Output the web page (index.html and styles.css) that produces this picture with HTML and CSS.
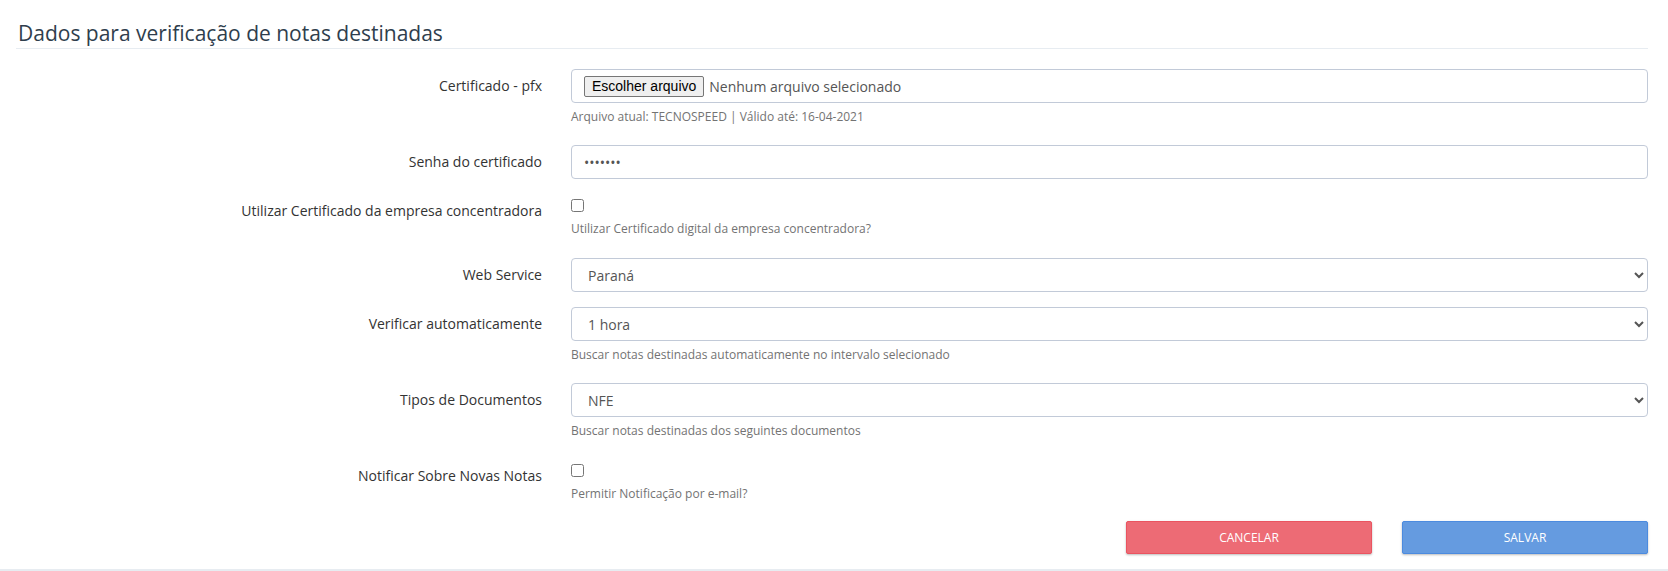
FILE: index.html
```html
<!DOCTYPE html>
<html lang="pt-BR">
<head>
<meta charset="utf-8">
<title>Dados para verificação de notas destinadas</title>
<link rel="stylesheet" href="styles.css">
</head>
<body>
<div class="page">
  <div class="portlet-title"><span class="caption">Dados para verificação de notas destinadas</span></div>
  <form class="form">
    <div class="row row-help">
      <label class="label">Certificado - pfx</label>
      <div class="field">
        <div class="control file-control"><span class="file-btn">Escolher arquivo</span><span class="file-name">Nenhum arquivo selecionado</span></div>
        <span class="help">Arquivo atual: TECNOSPEED | Válido até: 16-04-2021</span>
      </div>
    </div>
    <div class="row">
      <label class="label">Senha do certificado</label>
      <div class="field">
        <input class="control" type="password" value="1234567">
      </div>
    </div>
    <div class="row row-check">
      <label class="label">Utilizar Certificado da empresa concentradora</label>
      <div class="field">
        <div class="check-wrap"><input type="checkbox" class="check"></div>
        <span class="help help-check">Utilizar Certificado digital da empresa concentradora?</span>
      </div>
    </div>
    <div class="row">
      <label class="label">Web Service</label>
      <div class="field">
        <select class="control select"><option>Paraná</option></select>
      </div>
    </div>
    <div class="row row-help">
      <label class="label">Verificar automaticamente</label>
      <div class="field">
        <select class="control select"><option>1 hora</option></select>
        <span class="help">Buscar notas destinadas automaticamente no intervalo selecionado</span>
      </div>
    </div>
    <div class="row row-help">
      <label class="label">Tipos de Documentos</label>
      <div class="field">
        <select class="control select"><option>NFE</option></select>
        <span class="help">Buscar notas destinadas dos seguintes documentos</span>
      </div>
    </div>
    <div class="row row-check-last">
      <label class="label">Notificar Sobre Novas Notas</label>
      <div class="field">
        <div class="check-wrap"><input type="checkbox" class="check"></div>
        <span class="help help-check">Permitir Notificação por e-mail?</span>
      </div>
    </div>
    <div class="actions">
      <button type="button" class="btn btn-red">Cancelar</button>
      <button type="button" class="btn btn-blue">Salvar</button>
    </div>
  </form>
</div>
<div class="footer-line"></div>
</body>
</html>
```

FILE: styles.css
```css
html, body {
  margin: 0;
  padding: 0;
  background: #fff;
}
body {
  font-family: "Open Sans", "DejaVu Sans", sans-serif;
  font-size: 14px;
  color: #333;
}
.page {
  padding: 18px 20px 15px 16px;
}
.portlet-title {
  height: 30px;
  line-height: 30px;
  border-bottom: 1px solid #e7ecf1;
}
.caption {
  font-size: 21px;
  color: #2f3e4d;
  padding-left: 2px;
}
.form {
  margin-top: 20px;
}
.row {
  display: grid;
  grid-template-columns: 526px 1fr;
  column-gap: 29px;
  margin-bottom: 15px;
}
.row-help {
  margin-bottom: 19px;
}
.row-check {
  margin-bottom: 20px;
}
.row-check-last {
  margin-bottom: 18px;
}
.label {
  text-align: right;
  padding-top: 7px;
  line-height: 20px;
  color: #333;
}
.field {
  display: flex;
  flex-direction: column;
  align-items: stretch;
}
.control {
  box-sizing: border-box;
  height: 34px;
  width: 100%;
  margin: 0;
  border: 1px solid #c2cad8;
  border-radius: 4px;
  background: #fff;
  padding: 6px 12px;
  font-family: "Open Sans", sans-serif;
  font-size: 14px;
  color: #555;
  outline: none;
}
.file-control {
  display: flex;
  align-items: center;
  padding-top: 0;
  padding-bottom: 0;
}
.file-btn {
  box-sizing: border-box;
  height: 21px;
  line-height: 17px;
  padding: 1px 7px;
  border: 1px solid #767676;
  border-radius: 2px;
  background: #efefef;
  color: #000;
  font-family: "Liberation Sans", Arial, sans-serif;
  font-size: 14px;
  margin-right: 5px;
}
.file-name {
  color: #555;
  font-size: 14px;
}
.select {
  padding-left: 12px;
}
.help {
  display: block;
  margin-top: 5px;
  line-height: 18px;
  font-size: 12px;
  color: #737373;
}
.check-wrap {
  padding-top: 5px;
  height: 13px;
  line-height: 0;
}
.check {
  width: 13px;
  height: 13px;
  margin: 0;
}
.help-check {
  margin-top: 8px;
}
.actions {
  display: flex;
  justify-content: flex-end;
  gap: 30px;
}
.btn {
  box-sizing: border-box;
  width: 246px;
  height: 33px;
  border-radius: 2px;
  font-family: "Open Sans", sans-serif;
  font-size: 12px;
  text-transform: uppercase;
  color: #fff;
  cursor: pointer;
  box-shadow: 0 1px 3px rgba(0,0,0,0.1), 0 1px 2px rgba(0,0,0,0.18);
}
.btn-red {
  background: #ed6b75;
  border: 1px solid #ea5460;
}
.btn-blue {
  background: #659be0;
  border: 1px solid #4c8bdf;
}
.footer-line {
  height: 2px;
  background: #e7ecf1;
}
```
